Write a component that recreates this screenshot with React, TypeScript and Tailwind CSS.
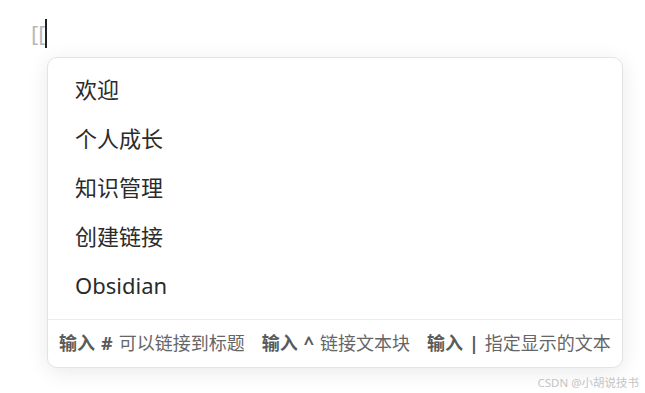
import React from "react";

const items = ["欢迎", "个人成长", "知识管理", "创建链接", "Obsidian"];

const hints = [
  { key: "#", text: "可以链接到标题" },
  { key: "^", text: "链接文本块" },
  { key: "|", text: "指定显示的文本" },
];

export default function App() {
  return (
    <div
      className="relative h-[393px] w-[645px] overflow-hidden bg-white"
      style={{ fontFamily: '"Noto Sans", "Noto Sans CJK SC", sans-serif' }}
    >
      {/* Editor line */}
      <div className="flex h-[57px] items-start pl-[31px] pt-[18px]">
        <span className="text-[22px] leading-[30px] text-[#b8b8b8]">[[</span>
        <span className="mt-[1px] h-[29px] w-[2px] bg-[#222]" />
      </div>

      {/* Suggestion popup */}
      <div className="ml-[47px] w-[576px] rounded-[10px] border border-[#e3e3e3] bg-white shadow-[0_4px_22px_rgba(0,0,0,0.09)]">
        <ul className="pt-[7px] pb-[9px]">
          {items.map((item) => (
            <li
              key={item}
              className="flex h-[49px] items-center pl-[27px] text-[22px] text-[#2b2b2b]"
            >
              {item}
            </li>
          ))}
        </ul>
        <div className="flex h-[48px] items-center gap-[17px] border-t border-[#ececec] pl-[11px] text-[18px] text-[#666]">
          {hints.map((h) => (
            <span key={h.key} className="flex items-center whitespace-nowrap">
              <span className="font-bold text-[#5a5a5a]">输入</span>
              <span className="mx-[6px] font-bold text-[#5a5a5a]">{h.key}</span>
              <span>{h.text}</span>
            </span>
          ))}
        </div>
      </div>

      {/* Watermark */}
      <div className="absolute right-[6px] top-[374px] text-[11.5px] text-[#c4c4c4]">
        CSDN @小胡说技书
      </div>
    </div>
  );
}
